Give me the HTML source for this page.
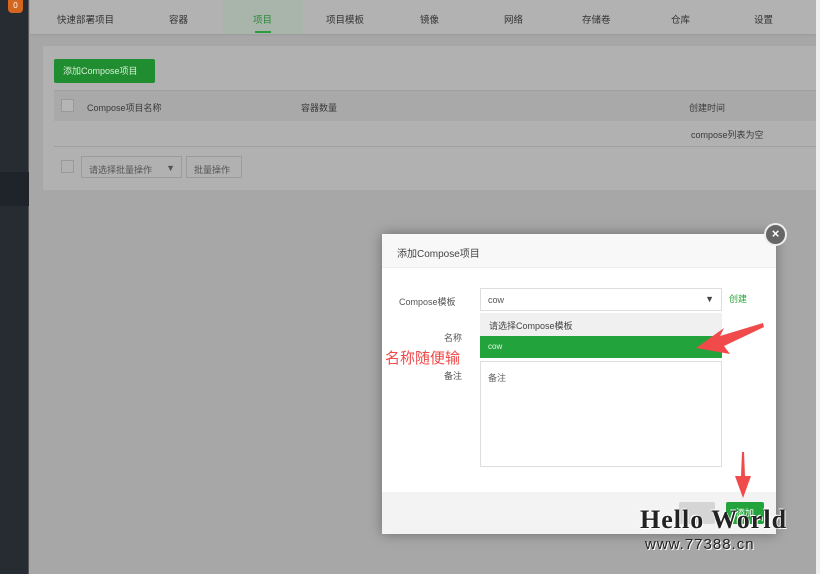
<!DOCTYPE html>
<html><head><meta charset="utf-8"><style>
*{margin:0;padding:0;box-sizing:border-box}
body{width:820px;height:574px;overflow:hidden;background:#a7a7a7;font-family:"Liberation Sans","Noto Sans CJK SC",sans-serif;font-size:9px;color:#3a3a3a;position:relative}
.abs{position:absolute}
.side{left:0;top:0;width:29px;height:574px;background:#262c32;border-right:1px solid #555}
.nav{left:30px;top:0;width:786px;height:34px;background:#b2b2b2;box-shadow:0 1px 2px #999}
.nav span{position:absolute;top:12px;color:#333;font-size:9.5px}
.card{left:43px;top:46px;width:773px;height:144px;background:#b1b1b1}
.modal{left:382px;top:234px;width:394px;height:300px;background:#fff;box-shadow:0 0 12px rgba(0,0,0,.35)}
</style></head><body>
<div class="abs side"></div>
<div class="abs" style="left:0;top:172px;width:29px;height:34px;background:#1f242a"></div>
<div class="abs" style="left:8px;top:0;width:15px;height:13px;background:#d4661f;border-radius:0 0 4px 4px;color:#fff;font-size:8px;text-align:center;line-height:11px">0</div>
<div class="abs nav">
<div class="abs" style="left:193px;top:0;width:80px;height:34px;background:#a9b4aa"></div>
<div class="abs" style="left:225px;top:31px;width:16px;height:2px;background:#2e9a3e"></div>
<span style="left:27px">快速部署项目</span><span style="left:139px">容器</span><span style="left:223px;color:#2a8a3a">项目</span><span style="left:296px">项目模板</span><span style="left:390px">镜像</span><span style="left:474px">网络</span><span style="left:552px">存储卷</span><span style="left:641px">仓库</span><span style="left:724px">设置</span>
</div>
<div class="abs" style="left:816px;top:0;width:4px;height:574px;background:#eee"></div>
<div class="abs card">
<div class="abs" style="left:11px;top:13px;width:101px;height:24px;background:#1f8d30;color:#d8efd8;font-size:9px;line-height:24px;padding-left:9px;border-radius:2px">添加Compose项目</div>
<div class="abs" style="left:11px;top:44px;width:762px;height:31px;background:#a9a9a9;border-top:1px solid #9f9f9f"></div>
<div class="abs" style="left:11px;top:75px;width:762px;height:26px;border-bottom:1px solid #a0a0a0"></div>
<div class="abs" style="left:18px;top:53px;width:13px;height:13px;border:1px solid #999;background:#b5b5b5"></div>
<div class="abs" style="left:44px;top:55px">Compose项目名称</div>
<div class="abs" style="left:258px;top:55px">容器数量</div>
<div class="abs" style="left:646px;top:55px">创建时间</div>
<div class="abs" style="left:648px;top:82px">compose列表为空</div>
<div class="abs" style="left:18px;top:114px;width:13px;height:13px;border:1px solid #999"></div>
<div class="abs" style="left:38px;top:110px;width:101px;height:22px;border:1px solid #9c9c9c;padding:6px 0 0 7px;color:#555">请选择批量操作 <span style="position:absolute;right:6px;top:6px">▼</span></div>
<div class="abs" style="left:143px;top:110px;width:56px;height:22px;border:1px solid #9c9c9c;padding:6px 0 0 7px;color:#555">批量操作</div>
</div>
<div class="abs modal">
<div class="abs" style="left:0;top:0;width:394px;height:34px;background:#f8f8f8;border-bottom:1px solid #eee;padding:11px 0 0 15px;font-size:10px;color:#444">添加Compose项目</div>
<div class="abs" style="left:17px;top:61px;color:#555">Compose模板</div>
<div class="abs" style="left:98px;top:54px;width:242px;height:23px;border:1px solid #ddd;padding:6px 0 0 7px;color:#555">cow<span style="position:absolute;right:7px;top:5px;color:#444">▼</span></div>
<div class="abs" style="left:347px;top:58px;color:#2aa33a">创建</div>
<div class="abs" style="left:98px;top:79px;width:242px;height:23px;background:#f0f0f0;padding:6px 0 0 9px;color:#444">请选择Compose模板</div>
<div class="abs" style="left:98px;top:102px;width:242px;height:22px;background:#22a33b;padding:6px 0 0 8px;color:#e6f5e6;font-size:8px">cow</div>
<div class="abs" style="left:62px;top:97px;color:#555">名称</div>
<div class="abs" style="left:3px;top:113px;color:#f04a4a;font-size:15px">名称随便输</div>
<div class="abs" style="left:62px;top:135px;color:#555">备注</div>
<div class="abs" style="left:98px;top:127px;width:242px;height:106px;border:1px solid #ddd;padding:9px 0 0 7px;color:#666">备注</div>
<div class="abs" style="left:0;top:258px;width:394px;height:42px;background:#f3f3f3"></div>
<div class="abs" style="left:297px;top:268px;width:36px;height:22px;background:#d5d5d5;border-radius:2px"></div>
<div class="abs" style="left:344px;top:268px;width:38px;height:22px;background:#22a33b;border-radius:2px;color:#fff;text-align:center;line-height:22px">添加</div>
</div>
<div class="abs" style="left:764px;top:223px;width:23px;height:23px;border-radius:50%;background:#666;border:2px solid #eee;color:#fff;font-size:13px;text-align:center;line-height:18px;font-weight:bold">×</div>
<svg class="abs" style="left:690px;top:318px" width="75" height="40"><polygon points="73,5 30,18 34,10 6,30 40,36 34,28 74,9" fill="#f04a4a"/></svg>
<svg class="abs" style="left:730px;top:452px" width="24" height="46"><polygon points="12,0 14,0 15,24 21,24 13,46 5,24 11,24" fill="#f04a4a"/></svg>
<div class="abs" style="left:640px;top:505px;font-family:'Liberation Serif',serif;font-weight:bold;font-size:26px;color:#222;letter-spacing:1px;text-shadow:1px 1px 0 #fff,-1px -1px 0 #fff">Hello World</div>
<div class="abs" style="left:645px;top:536px;font-size:15px;color:#222;letter-spacing:1px;text-shadow:1px 1px 0 #fff">www.77388.cn</div>
</body></html>
